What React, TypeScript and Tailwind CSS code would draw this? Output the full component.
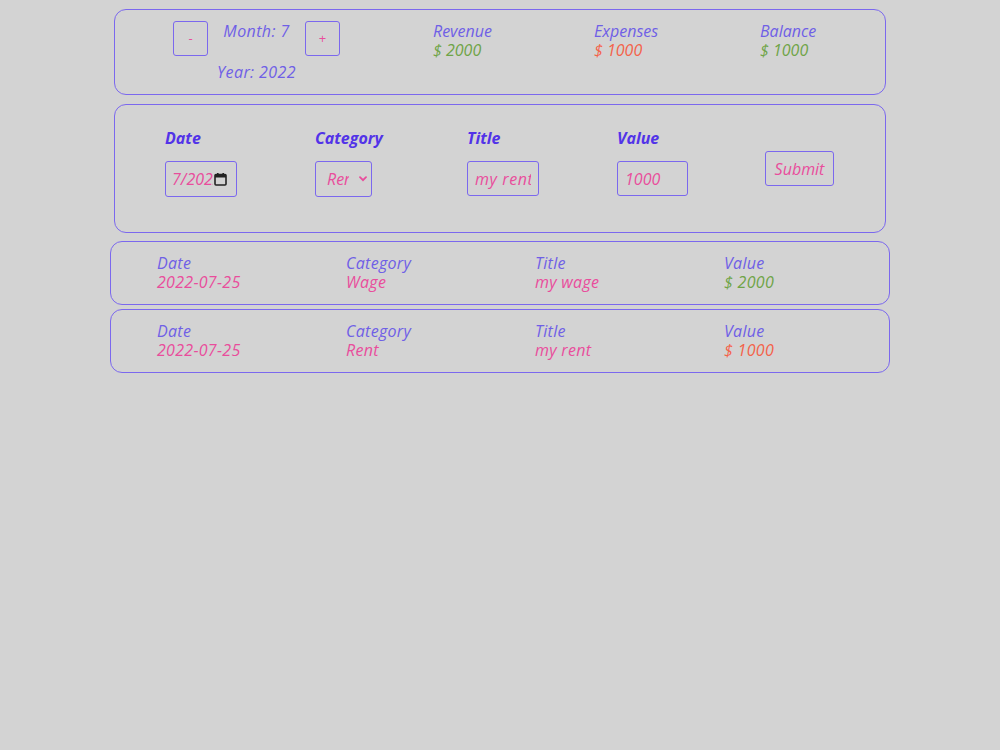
import React from "react";

const font = { fontFamily: '"Open Sans", "Liberation Sans", sans-serif' };

function CalendarIcon() {
  return (
    <svg width="13" height="13" viewBox="0 0 13 13" className="shrink-0">
      <rect x="1" y="1.5" width="11" height="10.5" rx="1" fill="none" stroke="#222" strokeWidth="1.6" />
      <rect x="1" y="1.5" width="11" height="3" fill="#222" />
      <rect x="3" y="0" width="1.6" height="2.5" fill="#222" />
      <rect x="8.4" y="0" width="1.6" height="2.5" fill="#222" />
    </svg>
  );
}

function Chevron() {
  return (
    <svg width="8" height="6" viewBox="0 0 8 6" className="shrink-0">
      <path d="M1 1.2 L4 4.2 L7 1.2" fill="none" stroke="#e94d9c" strokeWidth="1.8" strokeLinecap="round" />
    </svg>
  );
}

type Entry = { date: string; category: string; title: string; value: string; income: boolean };

const entries: Entry[] = [
  { date: "2022-07-25", category: "Wage", title: "my wage", value: "$ 2000", income: true },
  { date: "2022-07-25", category: "Rent", title: "my rent", value: "$ 1000", income: false },
];

function EntryRow({ e }: { e: Entry }) {
  const cells: [string, string, string][] = [
    ["Date", e.date, "text-[#e94d9c]"],
    ["Category", e.category, "text-[#e94d9c]"],
    ["Title", e.title, "text-[#e94d9c]"],
    ["Value", e.value, e.income ? "text-[#6fa447]" : "text-[#f4624a]"],
  ];
  return (
    <div className="h-[64px] border border-[#7b68ee] rounded-[12px] pl-[46px] pt-[12px] grid grid-cols-[189px_189px_189px_189px]">
      {cells.map(([label, val, cls]) => (
        <div key={label} className="flex flex-col leading-[19px] italic text-[16px] tracking-[0.3px]">
          <span className="text-[#6f5fe6]">{label}</span>
          <span className={cls}>{val}</span>
        </div>
      ))}
    </div>
  );
}

export default function App() {
  return (
    <div className="min-h-screen bg-[#d3d3d3]" style={font}>
      <div className="w-[780px] mx-auto pt-[9px] flex flex-col">
        {/* Month summary */}
        <div className="mx-[4px] h-[86px] border border-[#7b68ee] rounded-[12px] pl-[58px] pt-[11px] flex items-start">
          <div className="w-[167px] flex flex-col items-center">
            <div className="flex items-start w-full justify-between">
              <button className="w-[35px] h-[35px] border border-[#7b68ee] rounded-[3px] text-[13px] text-[#e94d9c] leading-none">
                -
              </button>
              <span className="italic text-[16px] leading-[20px] text-[#6f5fe6] tracking-[0.4px]">Month: 7</span>
              <button className="w-[35px] h-[35px] border border-[#7b68ee] rounded-[3px] text-[13px] text-[#e94d9c] leading-none">
                +
              </button>
            </div>
            <span className="mt-[6px] italic text-[16px] leading-[20px] text-[#6f5fe6] tracking-[0.4px]">Year: 2022</span>
          </div>
          <div className="ml-[93px] w-[161px] flex flex-col pt-[1px] italic text-[16px] leading-[19px]">
            <span className="text-[#6f5fe6]">Revenue</span>
            <span className="text-[#6fa447]">$ 2000</span>
          </div>
          <div className="w-[166px] flex flex-col pt-[1px] italic text-[16px] leading-[19px]">
            <span className="text-[#6f5fe6]">Expenses</span>
            <span className="text-[#f4624a]">$ 1000</span>
          </div>
          <div className="flex flex-col pt-[1px] italic text-[16px] leading-[19px]">
            <span className="text-[#6f5fe6]">Balance</span>
            <span className="text-[#6fa447]">$ 1000</span>
          </div>
        </div>

        {/* New entry form */}
        <div className="mt-[9px] mx-[4px] h-[129px] border border-[#7b68ee] rounded-[12px] pl-[50px] pt-[23px] flex items-start">
          <div className="w-[150px] flex flex-col">
            <span className="italic font-bold text-[16px] leading-[20px] text-[#5233e8]">Date</span>
            <div className="mt-[13px] w-[72px] h-[36px] border border-[#7b68ee] rounded-[3px] flex items-center pl-[6px] pr-[9px] gap-[1px]">
              <span className="flex-1 overflow-hidden whitespace-nowrap italic text-[16px] text-[#e94d9c]">7/2022</span>
              <CalendarIcon />
            </div>
          </div>
          <div className="w-[152px] flex flex-col">
            <span className="italic font-bold text-[16px] leading-[20px] text-[#5233e8]">Category</span>
            <div className="mt-[13px] w-[57px] h-[36px] border border-[#7b68ee] rounded-[3px] flex items-center pl-[11px] pr-[4px]">
              <span className="w-[22px] overflow-hidden whitespace-nowrap italic text-[16px] text-[#e94d9c]">Rent</span>
              <span className="flex-1" />
              <Chevron />
            </div>
          </div>
          <div className="w-[150px] flex flex-col">
            <span className="italic font-bold text-[16px] leading-[20px] text-[#5233e8]">Title</span>
            <input
              readOnly
              value="my rent"
              className="mt-[13px] w-[72px] h-[35px] border border-[#7b68ee] rounded-[3px] px-[7px] italic text-[16px] tracking-[0.6px] text-[#e94d9c] outline-none bg-transparent"
            />
          </div>
          <div className="w-[148px] flex flex-col">
            <span className="italic font-bold text-[16px] leading-[20px] text-[#5233e8]">Value</span>
            <input
              readOnly
              value="1000"
              className="mt-[13px] w-[71px] h-[35px] border border-[#7b68ee] rounded-[3px] px-[7px] italic text-[16px] text-[#e94d9c] outline-none bg-transparent"
            />
          </div>
          <button className="mt-[23px] w-[69px] h-[35px] border border-[#7b68ee] rounded-[3px] italic text-[16px] text-[#e94d9c]">
            Submit
          </button>
        </div>

        {/* Entries */}
        <div className="mt-[8px] flex flex-col gap-[4px]">
          {entries.map((e) => (
            <EntryRow key={e.title} e={e} />
          ))}
        </div>
      </div>
    </div>
  );
}
